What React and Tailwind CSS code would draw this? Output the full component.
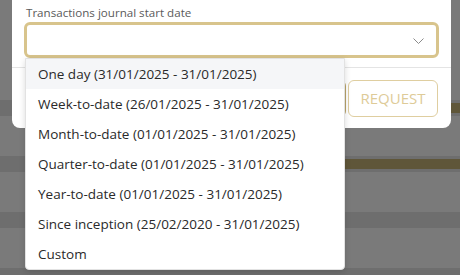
import React from "react";

const items = [
  "One day (31/01/2025 - 31/01/2025)",
  "Week-to-date (26/01/2025 - 31/01/2025)",
  "Month-to-date (01/01/2025 - 31/01/2025)",
  "Quarter-to-date (01/01/2025 - 31/01/2025)",
  "Year-to-date (01/01/2025 - 31/01/2025)",
  "Since inception (25/02/2020 - 31/01/2025)",
  "Custom",
];

function Stripe({ olive }) {
  return (
    <div className="h-[16px] bg-[#6e6e6e] flex flex-col justify-center">
      {olive ? <div className="ml-[300px] h-[10px] bg-[#5f5639]" /> : null}
    </div>
  );
}

export default function App() {
  return (
    <div
      className="relative w-[460px] h-[275px] overflow-hidden bg-[#7a7a7a]"
      style={{ fontFamily: '"Open Sans", "Noto Sans", sans-serif' }}
    >
      {/* dimmed page behind */}
      <div className="flex flex-col">
        <div className="h-[100px]" />
        <Stripe olive />
        <div className="h-[40px]" />
        <Stripe olive />
        <div className="h-[40px]" />
        <Stripe />
        <div className="h-[40px]" />
        <Stripe />
      </div>

      {/* modal */}
      <div className="absolute left-[12px] top-[-20px] w-[439px] h-[148px] bg-white rounded-[8px] flex flex-col">
        <div className="px-[12px] pt-[25px]">
          <div className="pl-[2px] text-[11.6px] leading-[16px] text-[#5a5a5a]">
            Transactions journal start date
          </div>
          <div className="mt-[1px] h-[36px] border-[3px] border-[#d8c48c] rounded-[6px] flex items-center justify-end pr-[12px]">
            <svg width="11" height="6" viewBox="0 0 11 6" fill="none" className="mt-[2px]">
              <path d="M0.5 0.5l5 5 5-5" stroke="#8a8a8a" strokeWidth="1" />
            </svg>
          </div>
        </div>
        <div className="mt-[9px] h-px bg-[#e4e4e4]" />
        <div className="flex justify-end gap-[2px] pr-[13px] pt-[12px]">
          <div className="w-[100px] h-[37px] border border-[#b9a46a] rounded-[6px]" />
          <div className="w-[90px] h-[37px] border border-[#dfcea0] rounded-[6px] flex items-center justify-center text-[15px] text-[#decb98]">
            REQUEST
          </div>
        </div>
      </div>

      {/* dropdown menu */}
      <div className="absolute left-[25px] top-[58px] w-[320px] bg-white rounded-b-[4px] border border-[#e2e2e2] shadow-[0_2px_6px_rgba(0,0,0,0.15)] flex flex-col">
        {items.map((t, i) => (
          <div
            key={t}
            className={
              "h-[30px] flex items-center pl-[12px] text-[13.5px] text-[#2a2a2a] " +
              (i === 0 ? "bg-[#f5f6f8]" : "")
            }
          >
            {t}
          </div>
        ))}
      </div>
    </div>
  );
}
